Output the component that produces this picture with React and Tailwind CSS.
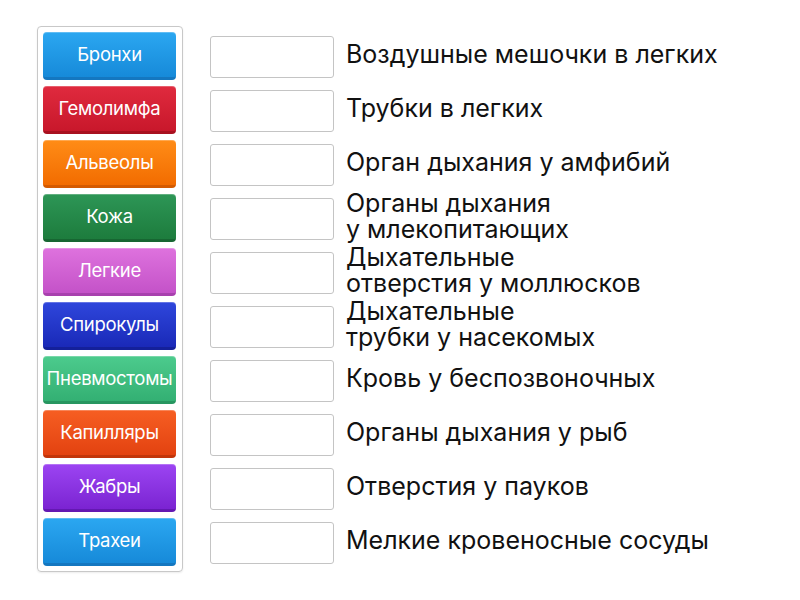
import React from "react";

const words = [
  { label: "Бронхи", cls: "bg-gradient-to-b from-[#2ba7f1] to-[#168ad9] border-[#1477c0]" },
  { label: "Гемолимфа", cls: "bg-gradient-to-b from-[#e02a3e] to-[#c8172b] border-[#a8101f]" },
  { label: "Альвеолы", cls: "bg-gradient-to-b from-[#ff8c16] to-[#f26c00] border-[#d45a00]" },
  { label: "Кожа", cls: "bg-gradient-to-b from-[#2d9656] to-[#1d7c3d] border-[#176632]" },
  { label: "Легкие", cls: "bg-gradient-to-b from-[#de72de] to-[#c452c8] border-[#a840ae]" },
  { label: "Спирокулы", cls: "bg-gradient-to-b from-[#2f46dc] to-[#1a29b8] border-[#14209a]" },
  { label: "Пневмостомы", cls: "bg-gradient-to-b from-[#4ccb8d] to-[#33b073] border-[#279660]" },
  { label: "Капилляры", cls: "bg-gradient-to-b from-[#f65e22] to-[#e34210] border-[#c2350a]" },
  { label: "Жабры", cls: "bg-gradient-to-b from-[#9c44f2] to-[#7b23d2] border-[#6418b2]" },
  { label: "Трахеи", cls: "bg-gradient-to-b from-[#2ba7f1] to-[#168ad9] border-[#1477c0]" },
];

const clues = [
  ["Воздушные мешочки в легких"],
  ["Трубки в легких"],
  ["Орган дыхания у амфибий"],
  ["Органы дыхания", "у млекопитающих"],
  ["Дыхательные", "отверстия у моллюсков"],
  ["Дыхательные", "трубки у насекомых"],
  ["Кровь у беспозвоночных"],
  ["Органы дыхания у рыб"],
  ["Отверстия у пауков"],
  ["Мелкие кровеносные сосуды"],
];

export default function App() {
  return (
    <div
      className="w-[800px] h-[600px] bg-white flex items-start pl-[37px] pt-[26px]"
      style={{ fontFamily: "Inter, Roboto, 'Liberation Sans', sans-serif" }}
    >
      <div className="w-[146px] border border-[#c8c8c8] rounded-[4px] p-[5px] pr-[6px] flex flex-col gap-[6px] shadow-[0_1px_2px_rgba(0,0,0,0.08)]">
        {words.map((w) => (
          <div
            key={w.label}
            className={`h-[48px] rounded-[4px] border-b-[3px] flex items-center justify-center text-white text-[18.5px] leading-none whitespace-nowrap tracking-[-0.3px] shadow-[inset_0_1px_0_rgba(255,255,255,0.25)] ${w.cls}`}
          >
            {w.label}
          </div>
        ))}
      </div>

      <div className="ml-[27px] pt-[10px] flex flex-col gap-[12px]">
        {clues.map((c, i) => (
          <div key={i} className="flex items-center h-[42px]">
            <div className="w-[124px] h-[42px] border border-[#c4c4c4] rounded-[3px] bg-white shrink-0" />
            <div className="ml-[12px] -mt-[6px] text-[25px] leading-[26px] text-[#111] whitespace-nowrap">
              {c.map((line, j) => (
                <div key={j}>{line}</div>
              ))}
            </div>
          </div>
        ))}
      </div>
    </div>
  );
}
